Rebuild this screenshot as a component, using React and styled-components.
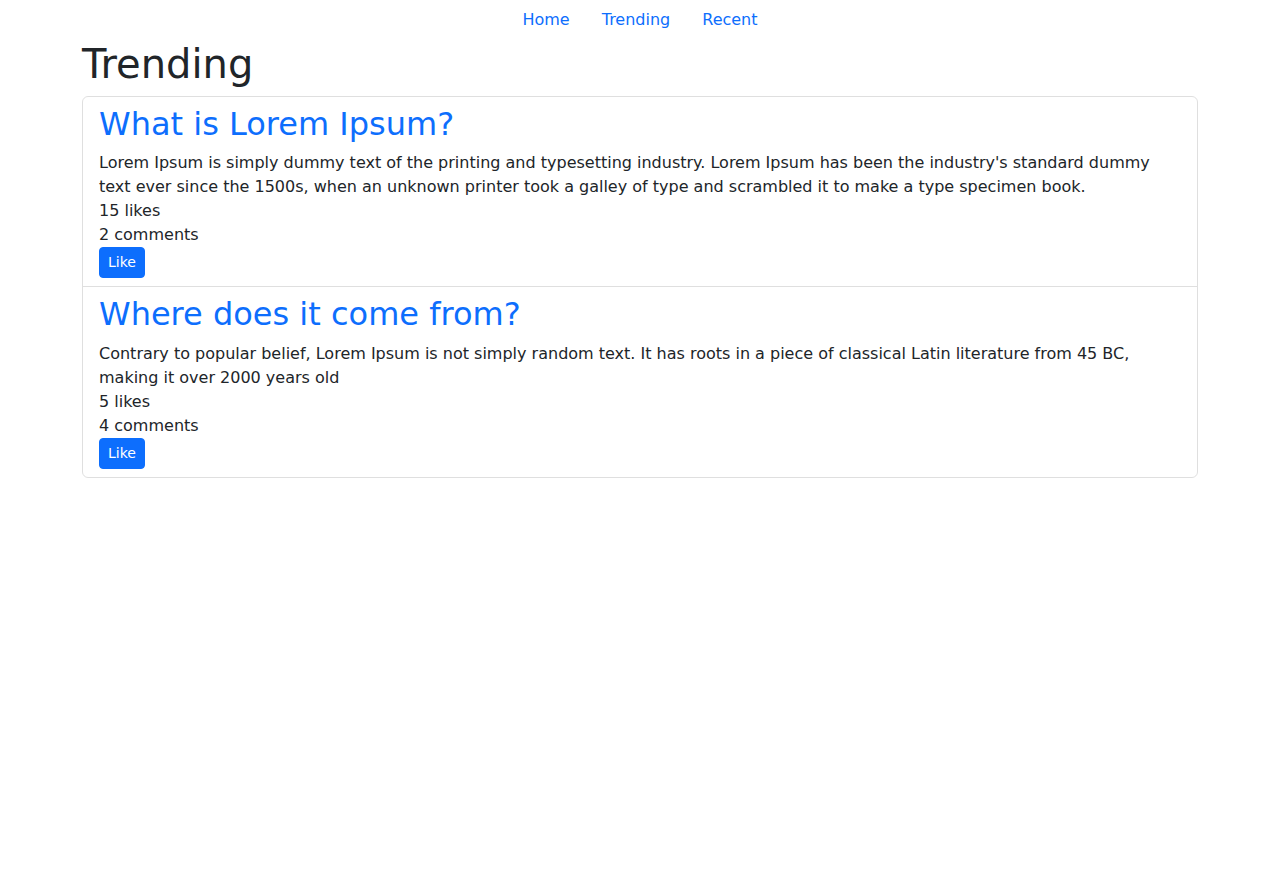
import React from "react";
import styled, { createGlobalStyle } from "styled-components";

const posts = [
  {
    title: "What is Lorem Ipsum?",
    body:
      "Lorem Ipsum is simply dummy text of the printing and typesetting industry. Lorem Ipsum has been the industry's standard dummy text ever since the 1500s, when an unknown printer took a galley of type and scrambled it to make a type specimen book.",
    likes: 15,
    comments: 2,
  },
  {
    title: "Where does it come from?",
    body:
      "Contrary to popular belief, Lorem Ipsum is not simply random text. It has roots in a piece of classical Latin literature from 45 BC, making it over 2000 years old",
    likes: 5,
    comments: 4,
  },
];

const App = () => {
  return (
    <>
      <GlobalStyle />
      <Nav>
        <NavLink href="#">Home</NavLink>
        <NavLink href="#">Trending</NavLink>
        <NavLink href="#">Recent</NavLink>
      </Nav>
      <Container>
        <PageTitle>Trending</PageTitle>
        <ListGroup>
          {posts.map((post, i) => (
            <Item key={i}>
              <PostTitle href="#">{post.title}</PostTitle>
              <div>{post.body}</div>
              <div>{post.likes} likes</div>
              <div>{post.comments} comments</div>
              <LikeButton>Like</LikeButton>
            </Item>
          ))}
        </ListGroup>
      </Container>
    </>
  );
};

export default App;

const GlobalStyle = createGlobalStyle`
  * { box-sizing: border-box; }
  body {
    margin: 0;
    font-family: "DejaVu Sans", "Liberation Sans", sans-serif;
    font-size: 16px;
    line-height: 1.5;
    color: #212529;
    background: #fff;
  }
`;

const Nav = styled.nav`
  display: flex;
  justify-content: center;
`;

const NavLink = styled.a`
  display: block;
  padding: 8px 16px;
  color: #0d6efd;
  text-decoration: none;
`;

const Container = styled.div`
  max-width: 1140px;
  margin: 0 auto;
  padding: 0 12px;
`;

const PageTitle = styled.h1`
  margin: 0 0 8px;
  font-size: 40px;
  font-weight: 500;
  line-height: 1.2;
`;

const ListGroup = styled.div`
  display: flex;
  flex-direction: column;
  border: 1px solid rgba(0, 0, 0, 0.125);
  border-radius: 6px;
`;

const Item = styled.div`
  padding: 8px 16px;
  & + & {
    border-top: 1px solid rgba(0, 0, 0, 0.125);
  }
`;

const PostTitle = styled.a`
  display: block;
  margin-bottom: 8px;
  font-size: 32px;
  font-weight: 500;
  line-height: 1.2;
  color: #0d6efd;
  text-decoration: none;
`;

const LikeButton = styled.button`
  display: inline-block;
  padding: 4px 8px;
  font-family: inherit;
  font-size: 14px;
  line-height: 1.5;
  color: #fff;
  background: #0d6efd;
  border: 1px solid #0d6efd;
  border-radius: 4px;
  cursor: pointer;
`;
